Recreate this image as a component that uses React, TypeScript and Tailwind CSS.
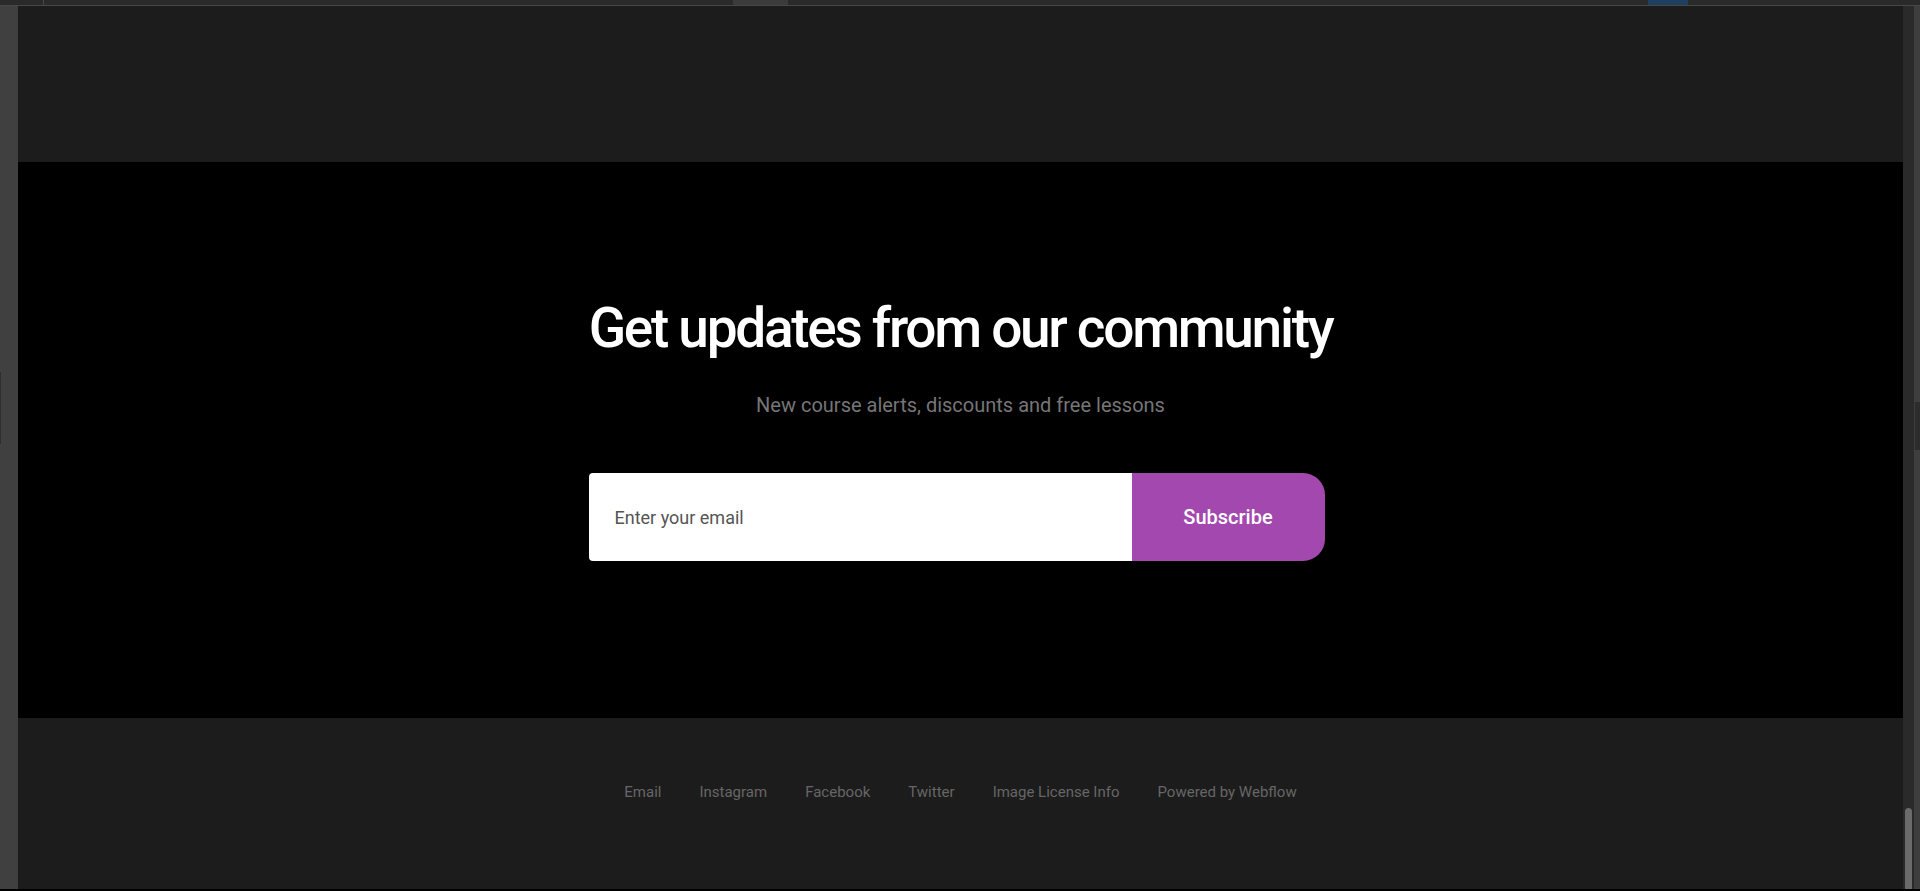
import React from "react";

export default function App() {
  const links = ["Email", "Instagram", "Facebook", "Twitter", "Image License Info", "Powered by Webflow"];
  return (
    <div className="flex h-[891px] w-[1920px] flex-col overflow-hidden bg-black" style={{ fontFamily: "Roboto, 'Liberation Sans', sans-serif" }}>
      {/* top strip */}
      <div className="relative h-[6px] shrink-0 border-b border-[#474747] bg-[#2a2a2a]">
        <div className="absolute left-[43px] top-0 h-[5px] w-px bg-[#474747]" />
        <div className="absolute left-[733px] top-0 h-[5px] w-[55px] bg-[#3b3b3b]" />
        <div className="absolute left-[1648px] top-0 h-[5px] w-[40px] bg-[#1f3f5e]" />
      </div>
      <div className="flex min-h-0 flex-1">
        {/* left rail */}
        <div className="relative w-[18px] shrink-0 bg-[#404040]">
          <div className="absolute left-0 top-[366px] h-[72px] w-px bg-[#2e2e2e]" />
        </div>
        {/* main */}
        <div className="flex min-w-0 flex-1 flex-col">
          <div className="h-[156px] shrink-0 bg-[#1c1c1c]" />
          <section className="flex h-[556px] shrink-0 flex-col items-center bg-black pt-[134px]">
            <h2 className="text-[55px] font-medium leading-[64px] tracking-[-0.042em] text-white">
              Get updates from our community
            </h2>
            <p className="mt-[31px] text-[20px] leading-[28px] text-[#767676]">
              New course alerts, discounts and free lessons
            </p>
            <form className="mr-[8px] mt-[54px] flex h-[88px] w-[736px]" onSubmit={(e) => e.preventDefault()}>
              <input
                type="email"
                placeholder="Enter your email"
                className="h-full w-[543px] rounded-l-[4px] bg-white pl-[26px] text-[18px] text-[#333] outline-none placeholder:text-[#555]"
              />
              <button
                type="submit"
                className="h-full flex-1 rounded-r-[22px] bg-[#a348ae] text-[20px] font-medium text-white"
              >
                Subscribe
              </button>
            </form>
          </section>
          <footer className="flex flex-1 items-start justify-center bg-[#1c1c1c] pt-[63px]">
            <nav className="flex gap-[38px]">
              {links.map((l) => (
                <a key={l} href="#" className="text-[15px] leading-[22px] text-[#666666]">
                  {l}
                </a>
              ))}
            </nav>
          </footer>
        </div>
        {/* right scrollbar */}
        <div className="flex w-[17px] shrink-0">
          <div className="relative w-[11px] bg-[#2a2a2a]">
            <div className="absolute bottom-0 left-[2px] h-[81px] w-[7px] rounded-t-[4px] bg-[#6b6b6b]" />
          </div>
          <div className="relative w-[6px] bg-[#3e3e3e]">
            <div className="absolute left-[1px] top-[396px] h-[48px] w-[5px] bg-[#2c2c2c]" />
          </div>
        </div>
      </div>
      <div className="h-[2px] shrink-0 bg-black" />
    </div>
  );
}
